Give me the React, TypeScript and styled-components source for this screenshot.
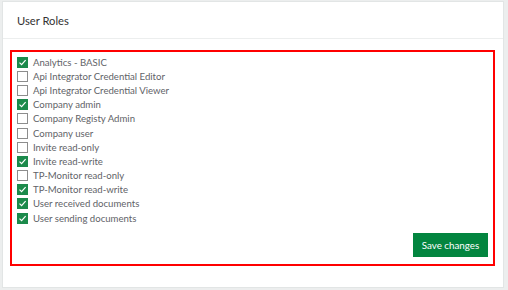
import React, { useState } from "react";
import styled, { createGlobalStyle } from "styled-components";

const Global = createGlobalStyle`
  html, body { margin: 0; padding: 0; background: #eceeee; }
  body { font-family: Lato, "Open Sans", sans-serif; }
  * { box-sizing: border-box; }
`;

const Page = styled.div`
  width: 508px;
  height: 290px;
  padding: 1px 4px 2px 2px;
`;

const Card = styled.div`
  background: #fff;
  border: 1px solid #e2e5e5;
  height: 287px;
  display: flex;
  flex-direction: column;
`;

const Header = styled.div`
  height: 37px;
  border-bottom: 1px solid #eceeee;
  display: flex;
  align-items: center;
  padding-left: 14px;
  font-size: 11.2px;
  color: #333;
`;

const Body = styled.div`
  padding: 11px 8px 0 7px;
`;

const Highlight = styled.div`
  border: 2px solid #ff0000;
  padding: 3px 5px 7px 5px;
  display: flex;
  flex-direction: column;
`;

const List = styled.div`
  display: flex;
  flex-direction: column;
`;

const Row = styled.label`
  display: flex;
  align-items: center;
  height: 14.2px;
  gap: 5px;
  font-size: 9.6px;
  color: #5f6368;
  cursor: pointer;
`;

const Box = styled.span<{ $checked: boolean }>`
  width: 11px;
  height: 11px;
  flex: none;
  border: 1px solid ${(p) => (p.$checked ? "#1b8a4b" : "#8d8d8d")};
  background: ${(p) => (p.$checked ? "#1b8a4b" : "#fff")};
  display: flex;
  align-items: center;
  justify-content: center;
`;

const Footer = styled.div`
  display: flex;
  justify-content: flex-end;
  margin-top: 8px;
`;

const SaveButton = styled.button`
  width: 75px;
  height: 24px;
  border: none;
  background: #03853f;
  color: #fff;
  font-family: Lato, "Open Sans", sans-serif;
  font-size: 9.8px;
  padding: 0;
  cursor: pointer;
`;

const roles: [string, boolean][] = [
  ["Analytics - BASIC", true],
  ["Api Integrator Credential Editor", false],
  ["Api Integrator Credential Viewer", false],
  ["Company admin", true],
  ["Company Registy Admin", false],
  ["Company user", false],
  ["Invite read-only", false],
  ["Invite read-write", true],
  ["TP-Monitor read-only", false],
  ["TP-Monitor read-write", true],
  ["User received documents", true],
  ["User sending documents", true],
];

const Check = () => (
  <svg width="9" height="9" viewBox="0 0 9 9">
    <path d="M1.5 4.6 L3.6 6.6 L7.6 2.2" fill="none" stroke="#fff" strokeWidth="1.2" />
  </svg>
);

export default function App() {
  const [state, setState] = useState(roles.map((r) => r[1]));
  return (
    <>
      <Global />
      <Page>
        <Card>
          <Header>User Roles</Header>
          <Body>
            <Highlight>
              <List>
                {roles.map(([name], i) => (
                  <Row
                    key={name}
                    onClick={() => setState((s) => s.map((v, j) => (j === i ? !v : v)))}
                  >
                    <Box $checked={state[i]}>{state[i] && <Check />}</Box>
                    {name}
                  </Row>
                ))}
              </List>
              <Footer>
                <SaveButton>Save changes</SaveButton>
              </Footer>
            </Highlight>
          </Body>
        </Card>
      </Page>
    </>
  );
}
